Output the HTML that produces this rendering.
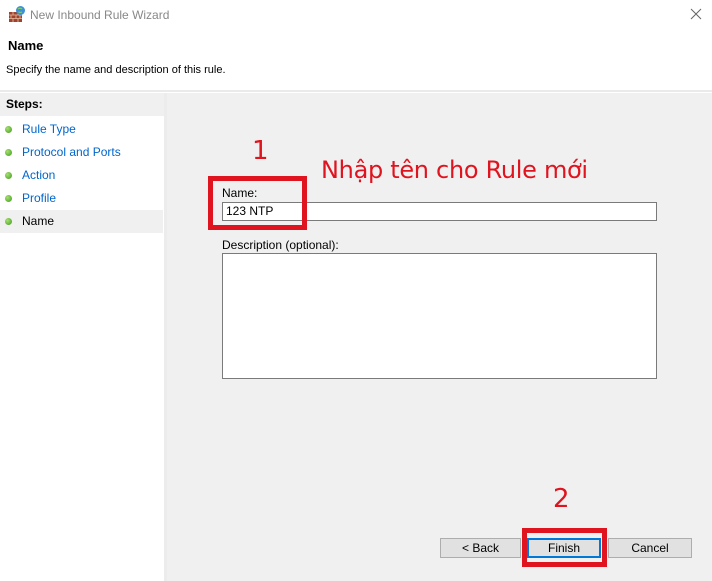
<!DOCTYPE html>
<html><head><meta charset="utf-8"><style>
*{margin:0;padding:0;box-sizing:border-box}
body{width:712px;height:581px;overflow:hidden;background:#fff;font-family:"Liberation Sans","DejaVu Sans",sans-serif;font-size:12px;color:#000;position:relative}
.a{position:absolute}
.step{position:absolute;left:0;width:163px;height:23px;font-size:12px;color:#0066cc;line-height:23px;padding-left:22px}
.dot{position:absolute;left:5px;top:8px;width:7px;height:7px;border-radius:50%;background:radial-gradient(circle at 35% 35%,#a8e070,#3c9a1e)}
.btn{position:absolute;top:538px;height:20px;background:#e1e1e1;border:1px solid #adadad;text-align:center;line-height:18px;font-size:12px}
.red{position:absolute;border:5px solid #e0141e}
</style></head><body>
<svg class="a" style="left:8px;top:5px" width="18" height="18" viewBox="0 0 18 18"><rect x="1" y="7" width="13" height="10" fill="#a0412d"/><path d="M1 10h13M1 13.5h13M5 7v3M10 7v3M3 10v3.5M8 10v3.5M12 10v3.5M5 13.5v3.5M10 13.5v3.5" stroke="#e8c0a0" stroke-width=".8"/><circle cx="12.5" cy="5.5" r="4.5" fill="#3d8fd6"/><path d="M10 4c1-1 3-1 4 0M10.5 7c1 .5 2.5.5 3.5 0" stroke="#7fd06a" stroke-width="1.2" fill="none"/></svg>
<div class="a" style="left:30px;top:8px;color:#888;font-size:12px">New Inbound Rule Wizard</div>
<svg class="a" style="left:690px;top:8px" width="12" height="12"><path d="M1 1l10 10M11 1L1 11" stroke="#666" stroke-width="1"/></svg>
<div class="a" style="left:8px;top:38px;font-weight:bold;font-size:13px">Name</div>
<div class="a" style="left:6px;top:64px;font-size:11px">Specify the name and description of this rule.</div>
<div class="a" style="left:0;top:90px;width:712px;height:2px;background:#eaeaea"></div>
<div class="a" style="left:0;top:93px;width:165px;height:23px;background:#f0f0f0;font-weight:bold;line-height:23px;padding-left:6px">Steps:</div>
<div class="a" style="left:164px;top:93px;width:3px;height:488px;background:#ececec"></div>
<div class="step" style="top:118px"><span class="dot"></span>Rule Type</div>
<div class="step" style="top:141px"><span class="dot"></span>Protocol and Ports</div>
<div class="step" style="top:164px"><span class="dot"></span>Action</div>
<div class="step" style="top:187px"><span class="dot"></span>Profile</div>
<div class="step" style="top:210px;background:#f0f0f0;color:#000"><span class="dot"></span>Name</div>
<div class="a" style="left:167px;top:93px;width:545px;height:488px;background:#f0f0f0"></div>
<div class="a" style="left:222px;top:186px">Name:</div>
<div class="a" style="left:222px;top:202px;width:435px;height:19px;background:#fff;border:1px solid #7a7a7a;padding-left:3px;line-height:17px">123 NTP</div>
<div class="a" style="left:222px;top:238px">Description (optional):</div>
<div class="a" style="left:222px;top:253px;width:435px;height:126px;background:#fff;border:1px solid #7a7a7a"></div>
<div class="red" style="left:208px;top:176px;width:99px;height:54px"></div>
<div class="a" style="left:252px;top:136px;color:#e0141e;font-size:26px;font-family:'DejaVu Sans',sans-serif">1</div>
<div class="a" style="left:321px;top:156px;color:#e0141e;font-size:24px;font-family:'DejaVu Sans',sans-serif;letter-spacing:-0.3px">Nhập tên cho Rule mới</div>
<div class="a" style="left:553px;top:484px;color:#e0141e;font-size:26px;font-family:'DejaVu Sans',sans-serif">2</div>
<div class="btn" style="left:440px;width:81px">&lt; Back</div>
<div class="btn" style="left:527px;width:74px;border:2px solid #0078d7;line-height:16px">Finish</div>
<div class="btn" style="left:608px;width:84px">Cancel</div>
<div class="red" style="left:522px;top:528px;width:85px;height:39px"></div>
</body></html>
